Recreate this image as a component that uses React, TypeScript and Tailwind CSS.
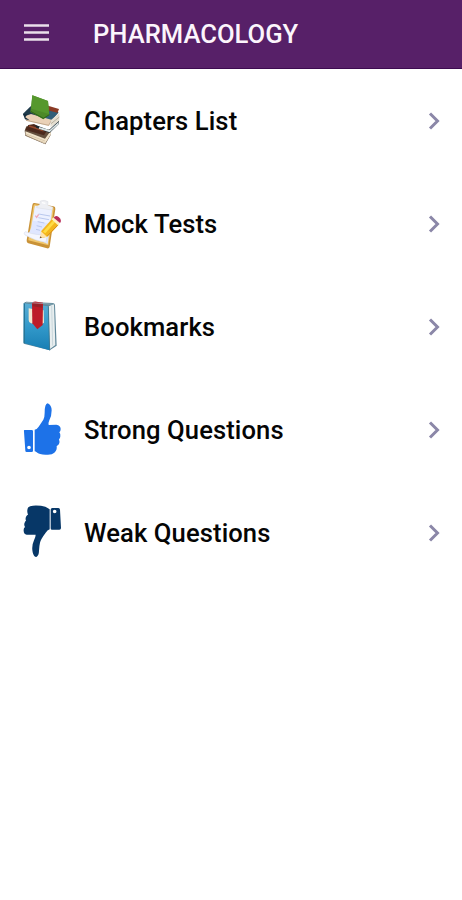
import type { ReactNode } from 'react';

interface MenuItem {
    label: string;
    icon: ReactNode;
}

const iconClass = 'h-[55px] w-10 shrink-0';

function BooksIcon() {
    return (
        <svg viewBox="36 24 120 165" className={iconClass}>
            <path d="M44 137l5-13 50 8 24 2-1 16-16 28-60-26z" fill="#65503e" />
            <path d="M46 139l59 22 17-23 1 9-18 29-58-26z" fill="#f0e3ca" />
            <path d="M48 147l57 21M50 153l54 20" stroke="#c5ad8a" strokeWidth="1.5" />
            <path d="M47 132l8-12 17-3 39 20-9 14-55-16z" fill="#4c291c" />
            <path d="M57 123l44 14" stroke="#96492d" strokeWidth="5" />
            <path d="M76 120l41 15 30-29v10l-28 28-40-16z" fill="#1b2932" />
            <path d="M88 126l31 9 27-25v7l-27 25-33-11z" fill="#dce6e6" />
            <path d="M39 86l23-22 84 17-30 34-71-17z" fill="#203c4c" />
            <path d="M114 62l33 10-6 15-25-4z" fill="#8a3b25" />
            <path d="M119 77l25 7-21 25-19-8z" fill="#315f79" />
            <path d="M43 94l20-7 61 17-7 19-68-16z" fill="#ead1b7" />
            <path d="M48 106l68 15 7-12" fill="none" stroke="#ad9275" strokeWidth="2" />
            <path d="M123 105l25-21v23l-27 20z" fill="#e5dfd0" />
            <path d="M122 117l26-21" stroke="#8b8372" strokeWidth="1.5" />
            <path d="M39 87l6 16 14 3-13-9 6-10z" fill="#172e3e" />
            <path d="M67 31l47 17 4 42-18 13-39-22z" fill="#4d8928" />
            <path d="M67 31l47 17 3 39-53-16z" fill="#56982d" />
            <path d="M62 79l38 21 18-11" fill="none" stroke="#2e6418" strokeWidth="3" />
        </svg>
    );
}

function ClipboardIcon() {
    return (
        <svg viewBox="36 18 120 165" className={iconClass}>
            <path d="M73 39l57 10q7 1 6 8l-17 113q-1 6-8 5l-56-15q-6-2-5-9l17-105q1-8 6-7z" fill="#c99237" />
            <path d="M74 43l53 9q5 1 4 6l-16 108-60-15 15-102q1-6 4-6z" fill="#f0c76e" />
            <path d="M75 47l52 11-14 104-62-28q9-6 12-20z" fill="#dfe6ff" />
            <path d="M75 48l49 10-6 42-49-8z" fill="#edf1ff" />
            <path d="M46 125q38 13 66 8l-4 24q-30-3-63-22-6-6 1-10z" fill="#f4f6ff" stroke="#d0d6e5" strokeWidth="1.5" />
            <path d="M86 72l34 6M85 83l32 6M83 95l20 4M80 107l16 4M78 118l12 3" stroke="#bac8ee" strokeWidth="3" />
            <path d="M76 77l4 5 6-9" fill="none" stroke="#efaaba" strokeWidth="4" />
            <path d="M80 50l9-6 2-11q11-5 23 2l-1 10 16 7-3 8-46-7z" fill="#eeeff3" stroke="#d9dbe1" strokeWidth="1.5" />
            <path d="M96 38l10 2" stroke="#fff" strokeWidth="4" />
            <path d="M93 124l33-37 20 17-34 36-17 4z" fill="#f4b71e" />
            <path d="M99 125l31-34 6 5-30 34z" fill="#ffdc46" />
            <path d="M112 138l31-32" stroke="#d78c1b" strokeWidth="3" />
            <path d="M125 88l5-6 20 17-6 7z" fill="#fff0bd" />
            <path d="M131 83q6-9 15-2 11 9 4 18z" fill="#b82d59" />
            <path d="M93 124l18 16-21 5z" fill="#ffe3aa" />
            <path d="M91 139l-2 6 7-2z" fill="#775536" />
        </svg>
    );
}

function BookmarkIcon() {
    return (
        <svg viewBox="36 21 120 165" className={iconClass}>
            <defs>
                <linearGradient id="cover" x1="0" y1="0" x2="0" y2="1">
                    <stop offset="0" stopColor="#59aed5" />
                    <stop offset=".5" stopColor="#3299ca" />
                    <stop offset="1" stopColor="#187eb3" />
                </linearGradient>
            </defs>
            <path d="M42 34q1-5 7-5l80 4q6 1 6 7l5 121-21 14-78-20z" fill="#60889a" />
            <path d="M116 43l16-6 4 122-17 13z" fill="#e8eeef" />
            <path d="M125 42l3 119" stroke="#b9cbd1" strokeWidth="2" />
            <path d="M41 34l73 9 5 132-78-22z" fill="url(#cover)" />
            <path d="M41 33v119l4 1V35z" fill="#277698" />
            <path d="M115 43l4 132" stroke="#34758f" strokeWidth="2.5" />
            <path d="M56 49q18 4 45 6l1 37-11 7-28-5q-7-2-7-10z" fill="#f4e8cf" />
            <path d="M66 33q5-5 14-4l19 3-1 67-16 13-15-18z" fill="#bd1c28" />
            <path d="M68 34l29 4v9l-29-4z" fill="#96222a" />
            <path d="M48 31l84 6" stroke="#9bb9c3" strokeWidth="2" />
        </svg>
    );
}

function ThumbUpIcon() {
    return (
        <svg viewBox="36 21 120 165" className={iconClass}>
            <path fillRule="evenodd" d="M43 105h22q4 0 4 4v58q0 4-4 4H50q-4 0-4-4l-4-57q-1-5 1-5zm14 47a5 5 0 1 0 0 11 5 5 0 0 0 0-11z" fill="#1d72e8" />
            <path d="M74 104q7-1 12-9l14-21q4-7 4-21 0-27 9-28 11 4 12 21 0 17-7 30-4 9-2 14l23-1q13 2 13 13 0 7-4 10 4 5 3 12 0 6-4 9 3 8 0 14-3 4-7 6 2 13-7 20-6 6-19 6-24 2-35-8-2-2-5-2z" fill="#1d72e8" />
        </svg>
    );
}

function ThumbDownIcon() {
    return (
        <svg viewBox="36 24 120 165" className={iconClass}>
            <path fillRule="evenodd" d="M127 33h18q5 0 5 5l3 55q0 5-5 5h-23q-3 0-3-4V38q0-5 5-5zm7 5a5.5 5.5 0 1 0 0 11 5.5 5.5 0 0 0 0-11z" fill="#073767" />
            <path d="M55 31q4-4 14-5 22-1 37 3 7 4 13 8v60q-7 2-12 10-15 20-17 30-2 8-3 24 0 14-8 19-8 0-11-14-4-19 4-36 5-10 5-17H50q-9-2-9-12-1-7 4-11-4-7-1-13 1-4 4-6-3-7 1-13 2-4 5-5-5-13 1-22z" fill="#073767" />
        </svg>
    );
}

const items: MenuItem[] = [
    { label: 'Chapters List', icon: <BooksIcon /> },
    { label: 'Mock Tests', icon: <ClipboardIcon /> },
    { label: 'Bookmarks', icon: <BookmarkIcon /> },
    { label: 'Strong Questions', icon: <ThumbUpIcon /> },
    { label: 'Weak Questions', icon: <ThumbDownIcon /> },
];

export default function App() {
    return (
        <div className="min-h-screen bg-white font-['Roboto',sans-serif]">
            <header className="flex h-[69px] items-center border-b border-[#3d0b50] bg-[#572068] pl-6">
                <button aria-label="Open menu" className="mt-[-3px] h-[17px] w-[25px]">
                    <svg viewBox="0 0 25 17" className="h-full w-full" fill="none" stroke="#eadfea" strokeWidth="2.5">
                        <path d="M0 1.5h25M0 8.5h25M0 15.5h25" />
                    </svg>
                </button>
                <h1 className="ml-11 pt-px text-[25.6px] font-medium leading-none text-[#fcf5fc]">PHARMACOLOGY</h1>
            </header>

            <nav>
                {items.map(item => (
                    <button key={item.label} className="flex h-[103px] w-full items-center pl-[22px] pr-[22px] text-left">
                        {item.icon}
                        <span className="ml-[22px] pt-[3px] text-[25.6px] font-medium leading-none tracking-[0.1px] text-[#050505]">
                            {item.label}
                        </span>
                        <svg viewBox="0 0 12 18" className="ml-auto h-[18px] w-3" fill="none" stroke="#8b87a8" strokeWidth="3">
                            <path d="M2 1.5L9.5 9 2 16.5" />
                        </svg>
                    </button>
                ))}
            </nav>
        </div>
    );
}
